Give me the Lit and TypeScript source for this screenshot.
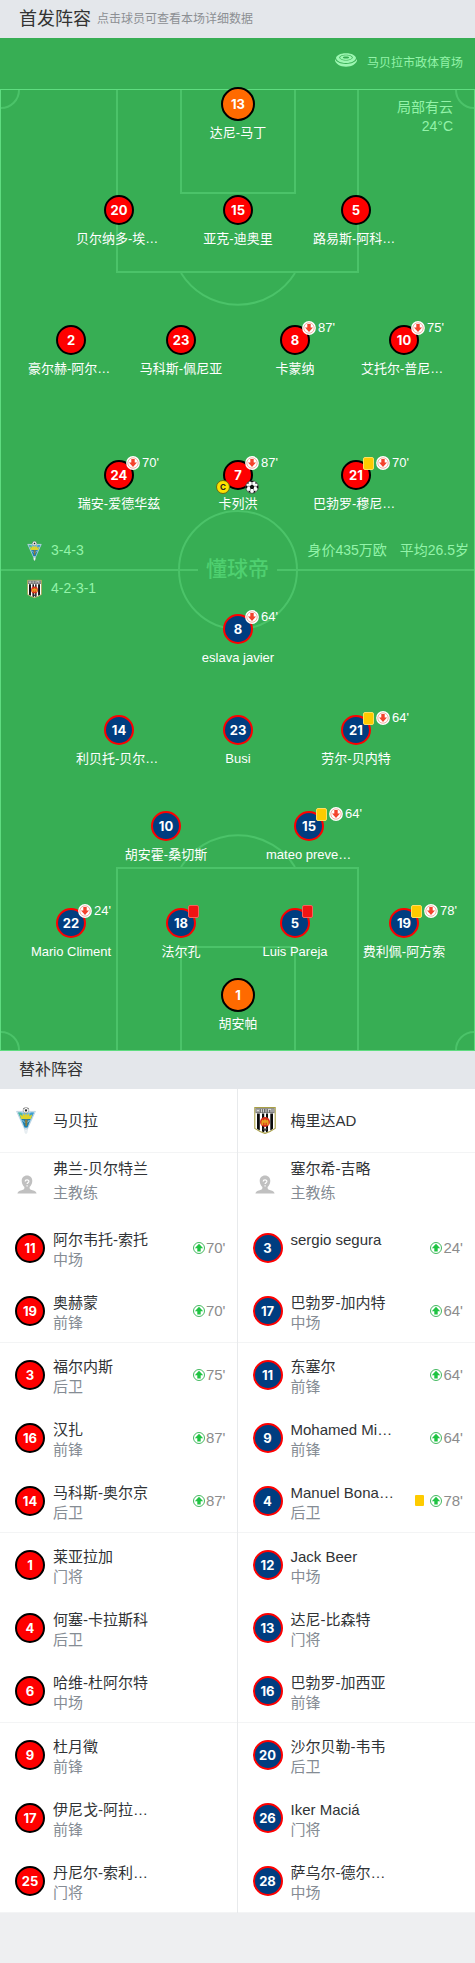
import { LitElement, html, svg, css, nothing } from "lit";
import { customElement, property } from "lit/decorators.js";
import { classMap } from "lit/directives/class-map.js";
import { styleMap } from "lit/directives/style-map.js";

type Side = "home" | "away" | "keeper";

interface Starter {
  no: number;
  name: string;
  side: Side;
  x: number;
  y: number;
  card?: "yellow" | "red";
  off?: string;
  captain?: boolean;
  goal?: boolean;
}

interface Sub {
  no: number;
  name: string;
  pos: string;
  on?: string;
  card?: "yellow";
}

/* Pitch drawing units; players are placed on this canvas. */
const PITCH_W = 475;
const PITCH_H = 1013;

const starters: Starter[] = [
  { no: 13, name: "达尼-马丁", side: "keeper", x: 238, y: 66 },
  { no: 20, name: "贝尔纳多-埃…", side: "home", x: 119, y: 172 },
  { no: 15, name: "亚克-迪奥里", side: "home", x: 238, y: 172 },
  { no: 5, name: "路易斯-阿科…", side: "home", x: 356, y: 172 },
  { no: 2, name: "豪尔赫-阿尔…", side: "home", x: 71, y: 302 },
  { no: 23, name: "马科斯-佩尼亚", side: "home", x: 181, y: 302 },
  { no: 8, name: "卡蒙纳", side: "home", x: 295, y: 302, off: "87'" },
  { no: 10, name: "艾托尔-普尼…", side: "home", x: 404, y: 302, off: "75'" },
  { no: 24, name: "瑞安-爱德华兹", side: "home", x: 119, y: 437, off: "70'" },
  { no: 7, name: "卡列洪", side: "home", x: 238, y: 437, off: "87'", captain: true, goal: true },
  { no: 21, name: "巴勃罗-穆尼…", side: "home", x: 356, y: 437, off: "70'", card: "yellow" },
  { no: 8, name: "eslava javier", side: "away", x: 238, y: 591, off: "64'" },
  { no: 14, name: "利贝托-贝尔…", side: "away", x: 119, y: 692 },
  { no: 23, name: "Busi", side: "away", x: 238, y: 692 },
  { no: 21, name: "劳尔-贝内特", side: "away", x: 356, y: 692, off: "64'", card: "yellow" },
  { no: 10, name: "胡安霍-桑切斯", side: "away", x: 166, y: 788 },
  { no: 15, name: "mateo preve…", side: "away", x: 309, y: 788, off: "64'", card: "yellow" },
  { no: 22, name: "Mario Climent", side: "away", x: 71, y: 885, off: "24'" },
  { no: 18, name: "法尔孔", side: "away", x: 181, y: 885, card: "red" },
  { no: 5, name: "Luis Pareja", side: "away", x: 295, y: 885, card: "red" },
  { no: 19, name: "费利佩-阿方索", side: "away", x: 404, y: 885, off: "78'", card: "yellow" },
  { no: 1, name: "胡安帕", side: "keeper", x: 238, y: 957 },
];

const homeSubs: Sub[] = [
  { no: 11, name: "阿尔韦托-索托", pos: "中场", on: "70'" },
  { no: 19, name: "奥赫蒙", pos: "前锋", on: "70'" },
  { no: 3, name: "福尔内斯", pos: "后卫", on: "75'" },
  { no: 16, name: "汉扎", pos: "前锋", on: "87'" },
  { no: 14, name: "马科斯-奥尔京", pos: "后卫", on: "87'" },
  { no: 1, name: "莱亚拉加", pos: "门将" },
  { no: 4, name: "何塞-卡拉斯科", pos: "后卫" },
  { no: 6, name: "哈维-杜阿尔特", pos: "中场" },
  { no: 9, name: "杜月徵", pos: "前锋" },
  { no: 17, name: "伊尼戈-阿拉…", pos: "前锋" },
  { no: 25, name: "丹尼尔-索利…", pos: "门将" },
];

const awaySubs: Sub[] = [
  { no: 3, name: "sergio segura", pos: "", on: "24'" },
  { no: 17, name: "巴勃罗-加内特", pos: "中场", on: "64'" },
  { no: 11, name: "东塞尔", pos: "前锋", on: "64'" },
  { no: 9, name: "Mohamed Mi…", pos: "前锋", on: "64'" },
  { no: 4, name: "Manuel Bona…", pos: "后卫", on: "78'", card: "yellow" },
  { no: 12, name: "Jack Beer", pos: "中场" },
  { no: 13, name: "达尼-比森特", pos: "门将" },
  { no: 16, name: "巴勃罗-加西亚", pos: "前锋" },
  { no: 20, name: "沙尔贝勒-韦韦", pos: "后卫" },
  { no: 26, name: "Iker Maciá", pos: "门将" },
  { no: 28, name: "萨乌尔-德尔…", pos: "中场" },
];

const homeCrest = html`<svg class="crest" viewBox="0 0 20 27" aria-hidden="true">
  <path d="M.6 4.4H19.4L11.400 22H8.600Z" fill="#dcecf4" stroke="#9fc0d4" stroke-width=".6" />
  <path d="M2 5.400H18L11.600 20.500H8.400Z" fill="#6db9e2" />
  <path d="M2 5.400H5.400L7 10 4.800 11.600Z" fill="#49b6a2" />
  <path d="M18 5.400H14.600L13 10 15.200 11.600Z" fill="#3d9cd0" />
  <path d="M5 12 3.800 7.600 6.600 9 7 6.200 8.900 8.400 10 5.800 11.100 8.400 13 6.200 13.400 9 16.200 7.600 15 12Z" fill="#ddd32c" />
  <path d="M5.600 12H14.400L11.400 20.500H8.600Z" fill="#1c7dac" />
  <path d="M9 12.600H11.600L10.900 19H9.500Z" fill="#8c7a3c" />
  <path d="M6.600 13 8.800 15.600M13.400 13 11.600 15.400" stroke="#d8e9ee" stroke-width=".7" />
  <path d="M8.600 22.400H11.400L10.800 25.600 10 26.600 9.200 25.600Z" fill="#f3f6f8" stroke="#c3d2dc" stroke-width=".5" />
  <circle cx="10" cy="3.200" r="2.900" fill="#f5f5f5" stroke="#777" stroke-width=".5" />
  <path d="M10 2 11.200 3 10.700 4.400H9.300L8.800 3Z" fill="#222" />
  <path d="M7.500 2 8.300 1.200M12.500 2 11.700 1.200" stroke="#333" stroke-width=".8" />
</svg>`;

const awayCrest = html`<svg class="crest wide" viewBox="0 0 22 27" aria-hidden="true">
  <path d="M.8.6H21.2V21.400Q17 24.600 11 26.400 5 24.600.8 21.400Z" fill="#fff" stroke="#a9a046" stroke-width="1.1" />
  <path d="M3 6.4H5.8V23.400L3 21.800ZM8 6.400H10.200V25.200L8 24.500ZM12 6.400H14V24.500L12 25.200ZM16.300 6.400H19V21.800L16.300 23.400Z" fill="#0b0b0b" />
  <rect x="1.500" y="1.300" width="19" height="4.800" fill="#6c6c6c" />
  <path d="M3 2V5.4M5 2V5.4M7.4 2V5.4M9.4 2V5.4M12 2V5.4M14.4 2V5.4M17 2V5.4M19 2V5.4M3 3.6H5M14.4 2.4H17" stroke="#f2f2f2" stroke-width=".8" />
  <circle cx="11" cy="15" r="5" fill="#d8301c" />
  <path d="M7.4 18V14.200L8.600 12.400 9.800 13.600 11 11.800 12.200 13.600 13.400 12.400 14.600 14.200V18H12.800V15.800H11.600V18H10.400V15.800H9.200V18Z" fill="#e6a021" />
  <path d="M8.4 21.4H13.6L11 24.4Z" fill="#444" />
</svg>`;

const coachIcon = html`<svg class="coach-icon" viewBox="0 0 20 19" aria-hidden="true">
  <path d="M10 .4C13.3.4 15.4 2.7 15.3 6 15.2 9 14 10.6 12.6 12 12.4 14.2 13.2 14.6 15.4 15.2 18 16 19.4 16.8 19.6 18.6H.4C.6 16.8 2 16 4.6 15.2 6.8 14.6 7.6 14.2 7.4 12 6 10.6 4.8 9 4.7 6 4.6 2.7 6.7.4 10 .4Z" fill="#c0c0c0" />
  <path d="M8.200 6.400C8.200 4.400 11.900 4.400 11.900 6.300 11.900 7.700 10.100 7.700 10.100 9M10.100 10.200V11.400" fill="none" stroke="#fff" stroke-width="1.2" />
</svg>`;

const offIcon = html`<svg class="swap" viewBox="0 0 14 14" role="img" aria-label="换下">
  <circle cx="7" cy="7" r="6.900" fill="#fff" />
  <circle cx="7" cy="7" r="5.200" fill="none" stroke="#ee8f80" stroke-width=".7" />
  <path d="M5.300 2.900H8.700V6.500H11L7 11 3 6.500H5.300Z" fill="#f4432c" />
</svg>`;

const onIcon = html`<svg class="swap-on" viewBox="0 0 12 12" role="img" aria-label="换上">
  <circle cx="6" cy="6" r="5.500" fill="#fff" stroke="#2fb04e" stroke-width=".9" />
  <path d="M4.300 9.600H7.700V6.300H10.200L6 1.800 1.800 6.300H4.300Z" fill="#1fc442" />
</svg>`;

const ballIcon = html`<svg class="ball" viewBox="0 0 14 14" role="img" aria-label="进球">
  <circle cx="7" cy="7" r="6.3" fill="#fff" stroke="#222" stroke-width=".6" />
  <path d="M7 4.5 9.4 6.2 8.5 9H5.5L4.6 6.2ZM4.6.9 9.4.9 7 2.5ZM.8 5.2 2.6 6.2 2 8.6.7 8.2ZM13.2 5.2 11.4 6.2 12 8.6 13.3 8.2ZM3.2 10.8 5 10.9 5.8 12.8 4 12.6ZM10.8 10.8 9 10.9 8.2 12.8 10 12.6ZM2.1 3 3.2 1.9 3.9 3.2 2.9 4ZM11.9 3 10.8 1.9 10.1 3.2 11.1 4Z" fill="#111" />
  <path d="M7 2.5V4.5M9.4 6.2 11.4 6.2M8.5 9 9 10.9M5.5 9 5 10.9M4.6 6.2H2.6" stroke="#222" stroke-width=".5" />
</svg>`;

const stadiumIcon = html`<svg class="stadium-icon" viewBox="0 0 22 14" aria-hidden="true">
  <g fill="#9df7b2">
    <path fill-rule="evenodd" d="M11 .3C17 .3 20.600 2.600 21 5 20.400 7.800 17 10 11 10S1.600 7.800 1 5C1.400 2.600 5 .3 11 .3ZM11 1.700C7 1.700 4.400 3 4.200 4.600 4.400 6 7 7.600 11 7.600S17.600 6 17.800 4.600C17.600 3 15 1.700 11 1.700Z" />
    <path fill-rule="evenodd" d="M11 2.200C14.600 2.200 16.800 3.300 17 4.600 16.800 6 14.600 7.100 11 7.100S5.200 6 5 4.600C5.200 3.300 7.400 2.200 11 2.200ZM11 3.600C9 3.600 8 4 7.900 4.500 8 5.100 9 5.500 11 5.500S14 5.100 14.100 4.500C14 4 13 3.600 11 3.600Z" />
    <path d="M0 5.800C1.200 9 5.500 11 11 11S20.800 9 22 5.800V7.800C20.800 11 17 13.700 11 13.700S1.200 11 0 7.800Z" />
  </g>
</svg>`;

const pitchLines = svg`
  <g fill="none" stroke="#4bc369" stroke-width="2">
    <path d="M117 52V234H358V52" />
    <path d="M181 52V155H295V52" />
    <path d="M181 235A67 67 0 0 0 295 235" />
    <path d="M117 1012V830H358V1012" />
    <path d="M181 1012V909H295V1012" />
    <path d="M181 829A67 67 0 0 1 295 829" />
    <circle cx="238" cy="532" r="59" />
    <path d="M1 532H198M277 532H474" />
    <path d="M19 52A18 18 0 0 1 1 70M456 52A18 18 0 0 0 474 70M1 994A18 18 0 0 1 19 1012M474 994A18 18 0 0 0 456 1012" />
  </g>
  <rect x=".5" y="51.5" width="474" height="961" fill="none" stroke="#5fdc80" />`;

@customElement("pitch-player")
class PitchPlayer extends LitElement {
  @property({ attribute: false }) player!: Starter;

  static styles = css`
    :host { display: block; }
    .player {
      position: relative;
      display: flex;
      flex-direction: column;
      align-items: center;
      gap: 4px;
      width: 96px;
      margin: 0;
      padding: 0;
      border: 0;
      background: none;
      color: #fff;
      font: 13px/20px "Liberation Sans", "Noto Sans CJK SC", sans-serif;
      white-space: nowrap;
      cursor: pointer;
    }
    .goalie { gap: 2px; }
    .cut { width: 86px; text-align: left; }
    .shirt {
      position: relative;
      box-sizing: border-box;
      width: 30px;
      height: 30px;
      border: 2px solid #000;
      border-radius: 50%;
      background: #fe0000;
      font: 700 13px/26px Inter, "Liberation Sans", sans-serif;
      text-align: center;
    }
    .away { border-color: #fe0000; background: #003d80; }
    .keeper { width: 34px; height: 34px; line-height: 30px; background: #ff6a00; }
    .marks {
      position: absolute;
      left: 20px;
      top: -6px;
      display: flex;
      align-items: center;
      gap: 2px;
      height: 14px;
      font: 13px/14px "Liberation Sans", sans-serif;
    }
    .swap { width: 14px; height: 14px; flex: none; }
    .card {
      box-sizing: border-box;
      width: 11px;
      height: 13px;
      border: 1px solid #ffdf60;
      border-radius: 2px;
      background: #fecb00;
    }
    .red { border-color: #f4625c; background: #f01414; }
    .captain, .ball {
      position: absolute;
      top: 18px;
      width: 14px;
      height: 14px;
    }
    .captain {
      box-sizing: border-box;
      left: -9px;
      border: 1px solid #6b6a10;
      border-radius: 50%;
      background: #fee100;
      color: #222;
      font: 700 8px/12px Inter, sans-serif;
    }
    .ball { left: 20px; }
  `;

  render() {
    const p = this.player;
    return html`<button class=${classMap({ player: true, goalie: p.side === "keeper" })} type="button">
      <span class="shirt ${p.side}">${p.no}
        ${p.card || p.off
          ? html`<span class="marks">
              ${p.card ? html`<span class="card ${p.card}"></span>` : nothing}
              ${p.off ? html`${offIcon}<span>${p.off}</span>` : nothing}
            </span>`
          : nothing}
        ${p.captain ? html`<span class="captain">C</span>` : nothing}
        ${p.goal ? ballIcon : nothing}
      </span>
      <span class=${classMap({ cut: p.name.endsWith("…") })}>${p.name}</span>
    </button>`;
  }
}

@customElement("bench-column")
class BenchColumn extends LitElement {
  @property() side: Side = "home";
  @property() team = "";
  @property() coach = "";
  @property({ attribute: false }) subs: Sub[] = [];

  static styles = css`
    :host { display: block; min-width: 0; }
    .list { margin: 0; padding: 0; list-style: none; }
    .row {
      display: flex;
      align-items: center;
      height: 63px;
      padding: 0 12px 0 15px;
      color: #303336;
      font-size: 15px;
      line-height: 20px;
      white-space: nowrap;
    }
    .row:nth-child(3n + 1) { border-bottom: 1px solid #f3f4f5; }
    .lead { display: flex; flex: none; width: 30px; margin-right: 8px; }
    .crest { width: 20px; height: 27px; margin-left: 1px; }
    .wide { width: 22px; }
    .coach-icon { width: 20px; height: 19px; margin-left: 2px; }
    .shirt {
      box-sizing: border-box;
      width: 30px;
      height: 30px;
      border: 2px solid #000;
      border-radius: 50%;
      background: #fe0000;
      color: #fff;
      font: 700 13px/26px Inter, "Liberation Sans", sans-serif;
      text-align: center;
    }
    .away { border-color: #fe0000; background: #003d80; }
    .info { flex: 1; min-width: 0; display: flex; flex-direction: column; }
    .name { min-height: 20px; }
    .pos { min-height: 20px; color: #858c94; }
    .coach-info { line-height: 24px; padding-bottom: 8px; }
    .sub .info { padding-top: 5px; }
    .time { display: flex; align-items: center; gap: 1px; color: #8c8c8c; }
    .swap-on { width: 12px; height: 12px; }
    .card {
      width: 9px;
      height: 11px;
      margin-right: 5px;
      border-radius: 1px;
      background: #fecb00;
    }
  `;

  render() {
    return html`<ul class="list">
      <li class="row">
        <span class="lead">${this.side === "home" ? homeCrest : awayCrest}</span>
        <span class="name">${this.team}</span>
      </li>
      <li class="row">
        <span class="lead">${coachIcon}</span>
        <span class="info coach-info">
          <span>${this.coach}</span>
          <span class="pos">主教练</span>
        </span>
      </li>
      ${this.subs.map(
        (s) => html`<li class="row sub">
          <span class="lead"><span class="shirt ${this.side}">${s.no}</span></span>
          <span class="info">
            <span class="name">${s.name}</span>
            <span class="pos">${s.pos}</span>
          </span>
          ${s.on
            ? html`<span class="time">
                ${s.card ? html`<span class="card"></span>` : nothing}${onIcon}<span>${s.on}</span>
              </span>`
            : nothing}
        </li>`
      )}
    </ul>`;
  }
}

@customElement("app-root")
class AppRoot extends LitElement {
  static styles = css`
    :host {
      display: block;
      min-height: 100vh;
      background: #eeeff1;
      font-family: "Liberation Sans", "Noto Sans CJK SC", sans-serif;
    }
    .bar {
      display: flex;
      align-items: center;
      gap: 6px;
      height: 38px;
      padding: 0 19px;
      background: #e4e7eb;
      color: #333;
    }
    .title { margin: 0; font-size: 18px; line-height: 24px; font-weight: 400; }
    .small { font-size: 16px; }
    .hint { font-size: 12px; line-height: 18px; color: #8c8f93; }
    .pitch {
      position: relative;
      aspect-ratio: 475 / 1013;
      background: #37ae54;
      color: #93f3a9;
      font-size: 14px;
      line-height: 19px;
      overflow: hidden;
    }
    .lines { position: absolute; inset: 0; width: 100%; height: 100%; }
    .brand {
      position: absolute;
      left: 0;
      right: 0;
      top: 52.5%;
      transform: translateY(-50%);
      padding-bottom: 6px;
      text-align: center;
      font: 500 21px/28px "Noto Sans CJK SC", sans-serif;
      color: #4fd070;
    }
    .top {
      position: relative;
      display: flex;
      justify-content: flex-end;
      align-items: center;
      gap: 10px;
      height: 51px;
      padding-right: 12px;
      font-size: 12px;
    }
    .stadium-icon { width: 22px; height: 14px; margin-bottom: 8px; }
    .weather { position: relative; padding: 9px 22px 0 0; text-align: right; }
    .summary {
      position: absolute;
      left: 27px;
      right: 6px;
      top: 52.5%;
      transform: translateY(-50%);
      display: grid;
      gap: 18px;
    }
    .shape { display: flex; align-items: center; height: 20px; }
    .crest { width: 15px; height: 20px; margin-right: 9px; }
    .worth { margin-left: auto; }
    .age { margin-left: 13px; }
    .node { position: absolute; transform: translate(-50%, -15px); }
    .node.keeper { transform: translate(-50%, -17px); }
    .bench { display: grid; grid-template-columns: 1fr 1fr; background: #fff; }
    .right { border-left: 1px solid #e8eaec; margin-left: -1px; }
  `;

  render() {
    return html`
      <header class="bar">
        <h2 class="title">首发阵容</h2>
        <span class="hint">点击球员可查看本场详细数据</span>
      </header>
      <section class="pitch">
        <svg class="lines" viewBox="0 0 475 1013" preserveAspectRatio="none" aria-hidden="true">${pitchLines}</svg>
        <div class="brand">懂球帝</div>
        <div class="top">${stadiumIcon}<span>马贝拉市政体育场</span></div>
        <div class="weather"><div>局部有云</div><div>24°C</div></div>
        <div class="summary">
          <div class="shape">
            ${homeCrest}<span>3-4-3</span>
            <span class="worth">身价435万欧</span><span class="age">平均26.5岁</span>
          </div>
          <div class="shape">${awayCrest}<span>4-2-3-1</span></div>
        </div>
        ${starters.map(
          (p) => html`<pitch-player
            class="node ${p.side}"
            style=${styleMap({
              left: `${(p.x / PITCH_W) * 100}%`,
              top: `${(p.y / PITCH_H) * 100}%`,
            })}
            .player=${p}
          ></pitch-player>`
        )}
      </section>
      <header class="bar"><h2 class="title small">替补阵容</h2></header>
      <section class="bench">
        <bench-column side="home" team="马贝拉" coach="弗兰-贝尔特兰" .subs=${homeSubs}></bench-column>
        <bench-column class="right" side="away" team="梅里达AD" coach="塞尔希-吉略" .subs=${awaySubs}></bench-column>
      </section>
    `;
  }
}
